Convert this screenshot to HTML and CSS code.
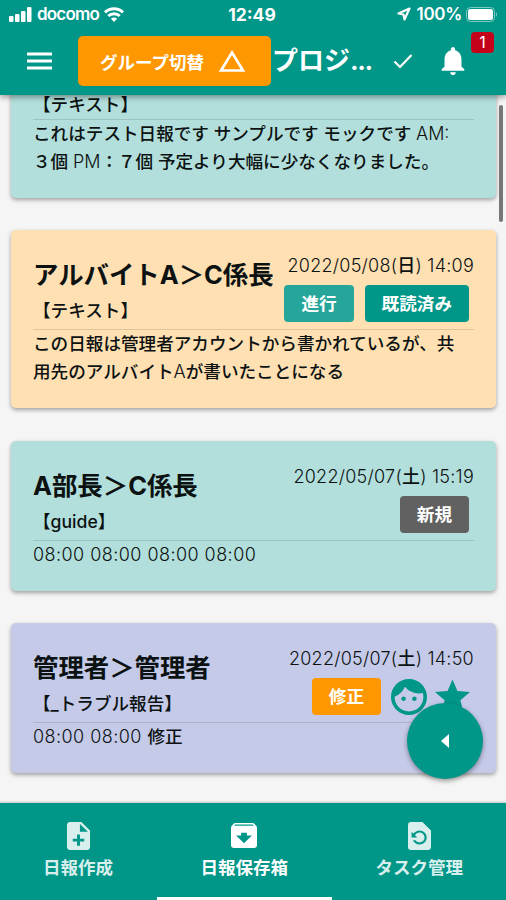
FILE: index.html
```html
<!DOCTYPE html>
<html lang="ja">
<head>
    <meta charset="UTF-8">
    <meta name="viewport" content="width=device-width, initial-scale=1.0">
    <title>日報保存箱</title>
    <link rel="stylesheet" href="styles.css">
</head>
<body>
<div class="app">
    <header class="header">
        <div class="status-bar">
            <div class="carrier">
                <svg width="23" height="15" viewBox="0 0 23 15" fill="currentColor"><rect x="0" y="9" width="4.5" height="6" rx="1"/><rect x="6" y="7" width="4.5" height="8" rx="1"/><rect x="12" y="4" width="4.5" height="11" rx="1"/><rect x="18" y="0" width="4.5" height="15" rx="1"/></svg>
                <span class="carrier-name">docomo</span>
                <svg width="20" height="15" viewBox="0 0 20 15" fill="none" stroke="currentColor" stroke-width="2.9"><path d="M1 5.4a13 13 0 0 1 18 0"/><path d="M4.3 9a8.2 8.2 0 0 1 11.4 0"/><path d="M6.9 11.7L10 15l3.100-3.300a4.400 4.400 0 0 0-6.200 0z" fill="currentColor" stroke="none"/></svg>
            </div>
            <div class="clock">12:49</div>
            <div class="battery">
                <svg class="location" width="14" height="14" viewBox="0 0 14 14"><path d="M12.500 1.500L1.500 6.500l5 1 1 5z" fill="none" stroke="currentColor" stroke-width="2.200" stroke-linejoin="round"/></svg>
                <span>100%</span>
                <svg width="32" height="15" viewBox="0 0 32 15"><rect x=".5" y=".5" width="28" height="14" rx="4" fill="none" stroke="#7fcac3"/><rect x="2" y="2" width="25" height="11" rx="2.500" fill="#fff"/><path d="M30 5v5q2-2.500 0-5z" fill="#7fcac3"/></svg>
            </div>
        </div>
        <div class="toolbar">
            <svg class="menu-icon" width="25" height="18" viewBox="0 0 25 18" fill="currentColor"><path d="M0 .5h25v3H0zM0 7.500h25v3H0zM0 14.500h25v3H0z"/></svg>
            <button class="group-btn">
                <span>グループ切替</span>
                <svg width="28" height="24" viewBox="0 0 28 24" fill="none" stroke="currentColor" stroke-width="2.600"><path d="M14 3.500L25 21.500H3z"/></svg>
            </button>
            <h1 class="title">プロジ<span class="dots">...</span></h1>
            <svg class="check-icon" width="20" height="16" viewBox="0 0 20 16" fill="none" stroke="currentColor" stroke-width="2.200"><path d="M1.500 8.500L7 14 18.500 2"/></svg>
            <div class="bell">
                <svg width="24" height="28" viewBox="3.500 2.500 17 19.500" fill="currentColor" preserveAspectRatio="none"><path d="M12 22c1.100 0 2-.9 2-2h-4c0 1.100.89 2 2 2zm6-6v-5c0-3.070-1.640-5.640-4.500-6.320V4c0-.83-.67-1.500-1.500-1.500s-1.500.67-1.500 1.500v.68C7.630 5.360 6 7.920 6 11v5l-2 2v1h16v-1l-2-2z"/></svg>
                <span class="badge">1</span>
            </div>
        </div>
    </header>

    <main class="reports">
        <section class="card teal">
            <div class="card-head"><div class="type">【テキスト】</div></div>
            <p class="text">これはテスト日報です サンプルです モックです <span class="latin">AM:</span><br>３個 <span class="latin">PM</span>：７個 予定より大幅に少なくなりました。</p>
        </section>

        <section class="card orange">
            <div class="card-head">
                <div class="who">
                    <h2 class="name">アルバイトA＞C係長</h2>
                    <div class="type">【テキスト】</div>
                </div>
                <div class="meta">
                    <time class="date">2022/05/08(<b>日</b>) 14:09</time>
                    <div class="tags">
                        <span class="tag progress">進行</span>
                        <span class="tag read">既読済み</span>
                    </div>
                </div>
            </div>
            <p class="text">この日報は管理者アカウントから書かれているが、共<br>用先のアルバイト<span class="latin">A</span>が書いたことになる</p>
        </section>

        <section class="card teal">
            <div class="card-head">
                <div class="who">
                    <h2 class="name">A部長＞C係長</h2>
                    <div class="type">【guide】</div>
                </div>
                <div class="meta">
                    <time class="date">2022/05/07(<b>土</b>) 15:19</time>
                    <div class="tags"><span class="tag new">新規</span></div>
                </div>
            </div>
            <p class="text"><span class="latin times">08:00 08:00 08:00 08:00</span></p>
        </section>

        <section class="card indigo">
            <div class="card-head">
                <div class="who">
                    <h2 class="name">管理者＞管理者</h2>
                    <div class="type">【_トラブル報告】</div>
                </div>
                <div class="meta">
                    <time class="date">2022/05/07(<b>土</b>) 14:50</time>
                    <div class="tags icons">
                        <span class="tag fix">修正</span>
                        <svg class="face" width="36" height="36" viewBox="2 2 20 20" fill="currentColor"><path d="M10.250 13c0 .69-.56 1.250-1.250 1.250S7.750 13.690 7.750 13s.56-1.250 1.250-1.250 1.250.56 1.250 1.250zM15 11.750c-.69 0-1.250.56-1.250 1.250s.56 1.250 1.250 1.250 1.250-.56 1.250-1.250-.56-1.250-1.250-1.250zm7 .25c0 5.520-4.480 10-10 10S2 17.520 2 12 6.480 2 12 2s10 4.480 10 10zm-2 0c0-.78-.12-1.530-.33-2.240-.7.150-1.420.24-2.170.24-3.130 0-5.920-1.440-7.760-3.690C8.690 8.870 6.600 10.880 4 11.860c.01.04 0 .09 0 .14 0 4.410 3.590 8 8 8s8-3.590 8-8z"/></svg>
                        <svg class="star" width="35" height="34" viewBox="2 2 20 19" fill="currentColor"><path d="M12 17.270L18.180 21l-1.640-7.030L22 9.240l-7.190-.61L12 2 9.190 8.630 2 9.240l5.460 4.730L5.820 21z"/></svg>
                    </div>
                </div>
            </div>
            <p class="text"><span class="latin times">08:00 08:00 </span>修正</p>
        </section>
        <div class="scroll-thumb"></div>
    </main>

    <button class="fab">
        <svg width="8" height="14" viewBox="0 0 8 14" fill="currentColor"><path d="M8 0v14L0 7z"/></svg>
    </button>

    <nav class="tabs">
        <a class="tab">
            <svg width="23" height="28" viewBox="4 2 16 20" preserveAspectRatio="none" fill="currentColor"><path d="M14 2H6c-1.100 0-2 .9-2 2v16c0 1.100.89 2 1.990 2H18c1.100 0 2-.9 2-2V8l-6-6zm2 14h-3v3h-2v-3H8v-2h3v-3h2v3h3v2zm-3-7V3.500L18.500 9H13z"/></svg>
            <span>日報作成</span>
        </a>
        <a class="tab active">
            <svg class="archive" width="26" height="25" viewBox="3 3 18 18" preserveAspectRatio="none" fill="currentColor"><path d="M20.540 5.230l-1.390-1.680C18.880 3.210 18.470 3 18 3H6c-.47 0-.88.210-1.160.550L3.460 5.230C3.170 5.570 3 6.020 3 6.500V19c0 1.100.9 2 2 2h14c1.100 0 2-.9 2-2V6.500c0-.48-.17-.93-.46-1.270zM12 17.500L6.500 12H10v-2h4v2h3.500L12 17.500zM5.120 5l.81-1h12l.94 1H5.120z"/></svg>
            <span>日報保存箱</span>
        </a>
        <a class="tab">
            <svg width="23" height="28" viewBox="4 2 16 20" preserveAspectRatio="none" fill="currentColor"><path d="M14 2H6c-1.100 0-2 .9-2 2v16c0 1.100.9 2 2 2h12c1.100 0 2-.9 2-2V8l-6-6zm-2 16c-2.050 0-3.810-1.240-4.580-3h1.710c.63.900 1.680 1.500 2.870 1.500 1.930 0 3.500-1.570 3.500-3.500S13.930 9.500 12 9.500c-1.350 0-2.520.780-3.100 1.900l1.600 1.600h-4V9l1.300 1.300C8.690 8.920 10.230 8 12 8c2.760 0 5 2.240 5 5s-2.240 5-5 5z"/></svg>
            <span>タスク管理</span>
        </a>
        <div class="home-bar"></div>
    </nav>
</div>
</body>
</html>
```
FILE: styles.css
```css
* {
    box-sizing: border-box;
}
body {
    margin: 0;
    background: #f5f5f5;
    color: #0c1212;
    font-family: Inter, "Noto Sans CJK JP", sans-serif;
}
h1, h2, p {
    margin: 0;
}
svg {
    display: block;
    flex: none;
}
button {
    border: none;
    padding: 0;
    color: white;
    font-family: inherit;
}
.app {
    position: relative;
    display: flex;
    flex-direction: column;
    height: 900px;
    overflow: hidden;
}

/* header */
.header {
    position: relative;
    z-index: 2;
    flex: none;
    height: 95px;
    background: #009688;
    color: white;
    box-shadow: 0 2px 6px rgba(0, 0, 0, 0.4);
}
.status-bar {
    display: grid;
    grid-template-columns: 1fr auto 1fr;
    align-items: center;
    height: 28px;
    padding: 0 8px 0 9px;
    font-size: 17px;
    font-weight: 600;
}
.carrier, .battery {
    display: flex;
    align-items: center;
    gap: 5px;
}
.carrier-name {
    font-weight: 600;
    letter-spacing: -0.8px;
}
.battery {
    justify-content: flex-end;
    gap: 4px;
    font-weight: 600;
    letter-spacing: -0.3px;
}
.location {
    margin-right: 2px;
}
.clock {
    margin-right: 3px;
    font-size: 17.5px;
    font-weight: 700;
}
.toolbar {
    display: flex;
    align-items: center;
    height: 50px;
    margin-top: 8px;
    padding-left: 27px;
}
.group-btn {
    display: flex;
    align-items: center;
    justify-content: center;
    gap: 14px;
    flex: none;
    width: 193px;
    height: 50px;
    margin-left: 26px;
    padding-right: 3px;
    border-radius: 5px;
    background: #ff9800;
    font-size: 17.5px;
    font-weight: 700;
}
.title {
    flex: none;
    width: 100px;
    margin-left: 1px;
    font-size: 26px;
    line-height: 40px;
    white-space: nowrap;
}
.dots {
    letter-spacing: -1.5px;
}
.check-icon {
    margin-left: 21px;
}
.bell {
    position: relative;
    margin-left: 28px;
}
.badge {
    position: absolute;
    left: 30px;
    top: -15px;
    width: 23px;
    height: 21px;
    border-radius: 4px;
    background: #c4001a;
    font-size: 16px;
    line-height: 21px;
    text-align: center;
}

/* report list */
.reports {
    position: relative;
    display: flex;
    flex-direction: column;
    justify-content: flex-end;
    gap: 32px;
    flex: 1;
    min-height: 0;
    padding: 0 10px 30px 11px;
}
.card {
    flex: none;
    padding: 22px;
    border-radius: 5px;
    box-shadow: 0 2px 4px rgba(0, 0, 0, 0.35);
}
.teal { background: #b2dfdb; }
.orange {
    margin-bottom: 1px;
    background: #ffe0b2;
}
.indigo { background: #c5cae9; }
.card-head {
    display: flex;
    justify-content: space-between;
    border-bottom: 1px solid rgba(0, 0, 0, 0.12);
}
.who {
    height: 77px;
}
.name {
    font-size: 25.4px;
    line-height: 45px;
    white-space: nowrap;
}
.type {
    font-size: 17.6px;
    font-weight: 500;
    line-height: 28px;
}
.meta {
    display: flex;
    flex-direction: column;
    align-items: flex-end;
    flex: none;
}
.date {
    font-size: 18px;
    font-weight: 350;
    letter-spacing: 0.25px;
    line-height: 27px;
    white-space: nowrap;
}
.date b {
    font-weight: 500;
}
.tags {
    display: flex;
    gap: 11px;
    margin: 6px 5px 0 0;
}
.tag {
    padding: 0 17px;
    border-radius: 4px;
    color: white;
    font-size: 17.6px;
    font-weight: 700;
    line-height: 37px;
}
.progress { background: #26a69a; }
.read { background: #009688; }
.new { background: #616161; }
.fix { background: #ff9800; }
.icons {
    gap: 8px;
    margin-right: 4px;
    color: #009688;
}
.fix {
    margin-right: 2px;
}
.face, .star {
    margin-top: 1px;
}
.text {
    font-size: 17.6px;
    font-weight: 500;
    line-height: 28px;
    white-space: nowrap;
}
.latin {
    font-size: 18px;
    font-weight: 300;
}
.times {
    letter-spacing: 0.45px;
}
.scroll-thumb {
    position: absolute;
    right: 3px;
    top: 10px;
    width: 4px;
    height: 117px;
    border-radius: 2px;
    background: #777;
}

.fab {
    position: absolute;
    z-index: 3;
    left: 407px;
    top: 703px;
    display: flex;
    align-items: center;
    justify-content: center;
    width: 76px;
    height: 76px;
    border-radius: 50%;
    background: #009688;
    box-shadow: 0 2px 5px rgba(0, 0, 0, 0.4);
}

/* bottom tabs */
.tabs {
    position: relative;
    display: flex;
    justify-content: space-between;
    flex: none;
    height: 97px;
    padding: 19px 43px 0 43px;
    background: #009688;
    color: #d9efed;
    box-shadow: 0 -1px 2px rgba(0, 0, 0, 0.2);
}
.tab {
    display: flex;
    flex-direction: column;
    align-items: center;
    font-size: 17.5px;
    font-weight: 700;
}
.tab span {
    margin-top: 4px;
    line-height: 28px;
}
.archive {
    margin: 1px 0 2px;
}
.active {
    color: white;
}
.home-bar {
    position: absolute;
    left: 157px;
    bottom: 0;
    width: 175px;
    height: 3px;
    background: white;
}
```
